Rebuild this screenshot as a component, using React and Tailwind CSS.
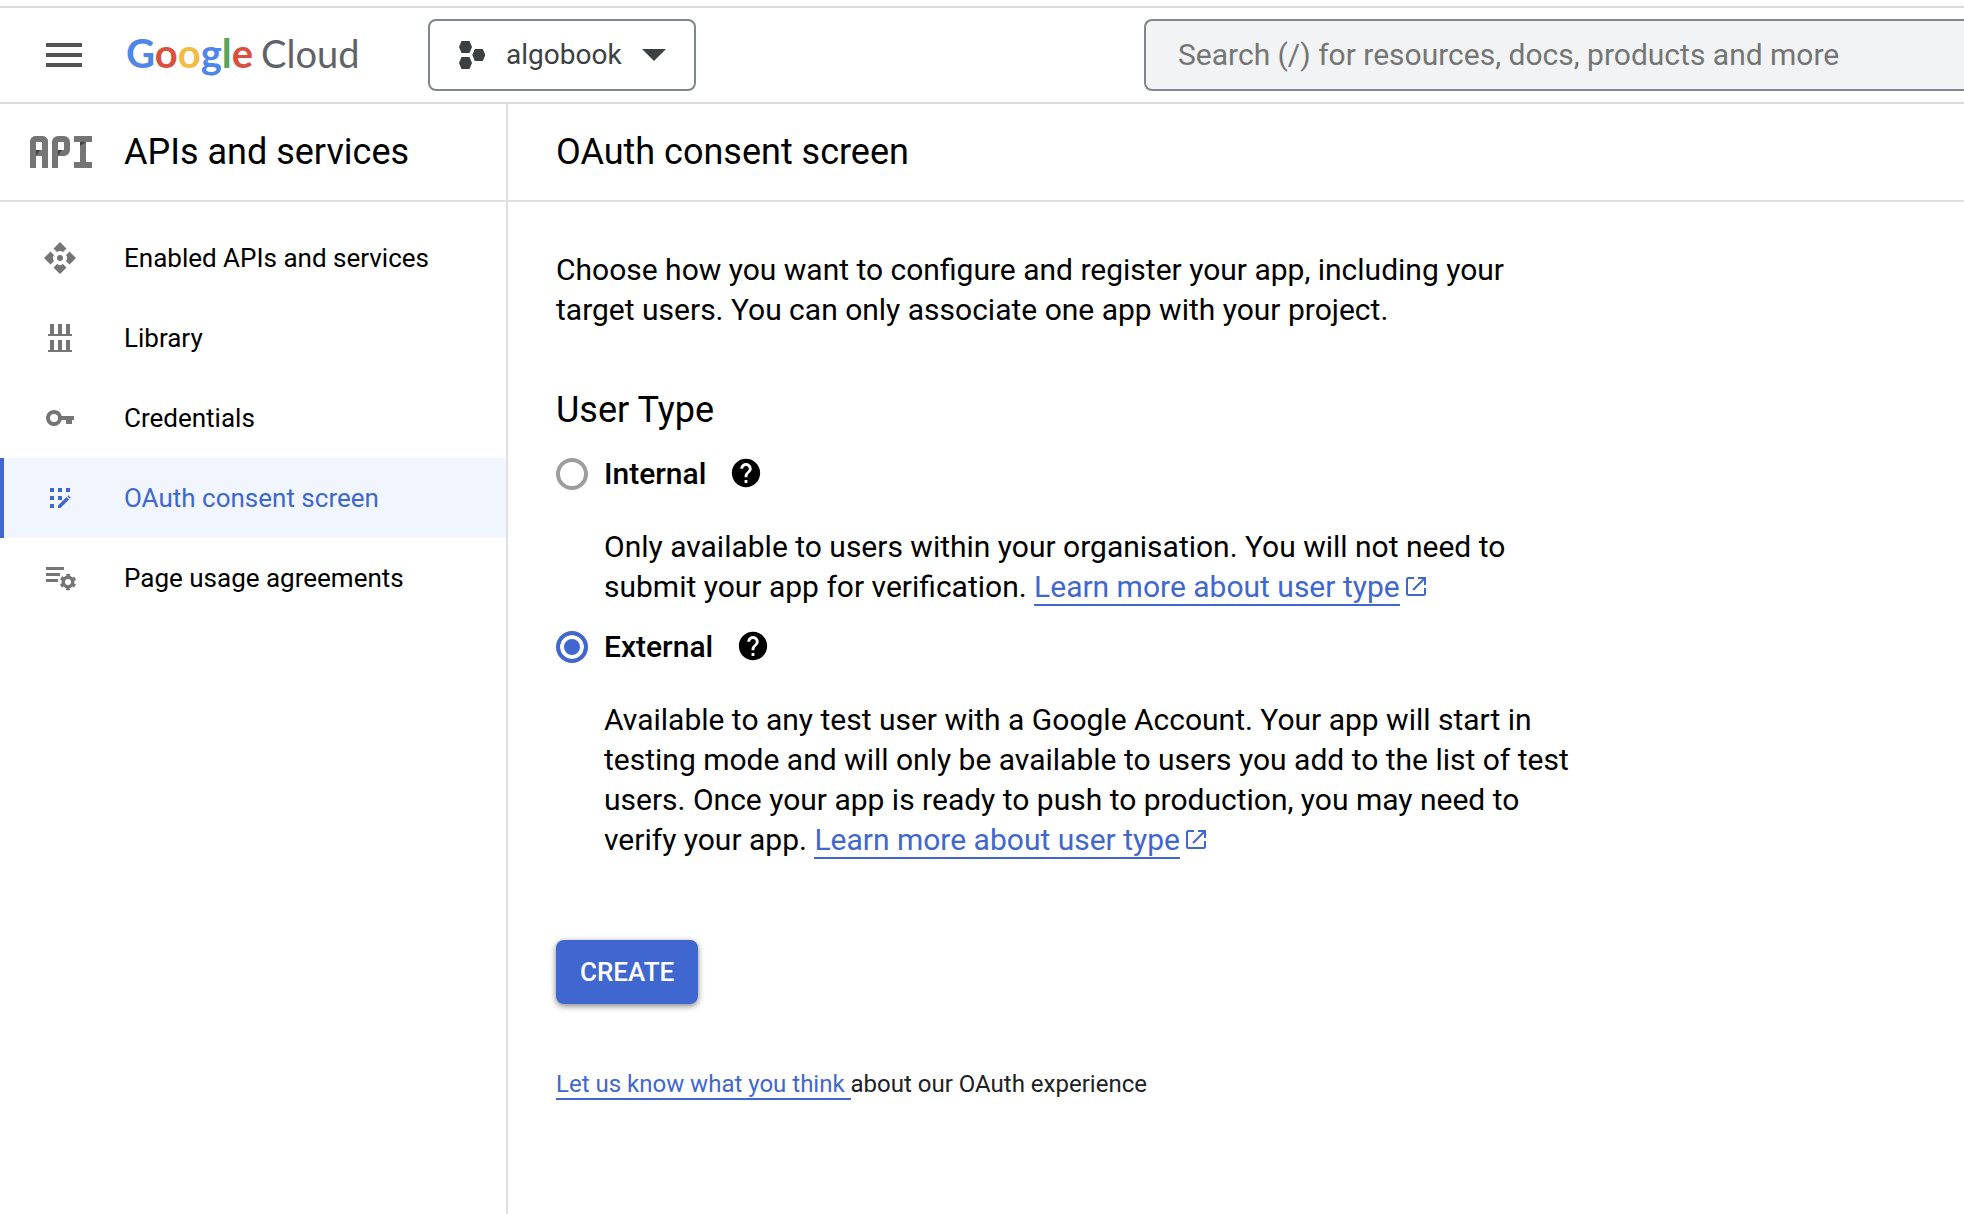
import React, { useState } from 'react';
import { MdHelp } from 'react-icons/md';

const ApiIcon = () => (
  <svg viewBox="0 0 32 32" className="w-8 h-8" fill="currentColor">
    <circle cx="16" cy="16" r="3" />
    <path d="M16 0l6.500 6.500-3.500 3.500a5 5 0 0 0-6 0L9.500 6.500z" />
    <path d="M16 32l6.500-6.500L19 22a5 5 0 0 1-6 0l-3.500 3.500z" />
    <path d="M0 16l6.500-6.500L10 13a5 5 0 0 0 0 6l-3.500 3.500z" />
    <path d="M32 16l-6.500-6.500L22 13a5 5 0 0 1 0 6l3.500 3.500z" />
  </svg>
);

const LibraryIcon = () => (
  <svg viewBox="0 0 32 32" className="w-8 h-8" fill="currentColor">
    <path d="M6 2h4v10h4V2h4v10h4V2h4v10h2v2H4v-2h2z" />
    <path d="M6 18h4v10h4V18h4v10h4V18h4v10h2v2H4v-2h2z" />
  </svg>
);

const KeyIcon = () => (
  <svg viewBox="0 0 32 32" className="w-8 h-8" fill="currentColor">
    <path fillRule="evenodd" d="M10 8a8 8 0 1 0 7.700 10H22v4h6v-4h2v-4H17.700A8 8 0 0 0 10 8zm0 4a4 4 0 1 1 0 8 4 4 0 0 1 0-8z" />
  </svg>
);

const ConsentIcon = () => (
  <svg viewBox="0 0 32 32" className="w-8 h-8" fill="currentColor">
    <path d="M6 6h4v4H6zM14 6h4v4h-4zM22 6h4v4h-4zM6 14h4v4H6zM14 14h4v4h-4zM6 22h4v4H6z" />
    <path d="M14 23.500l8.500-8.500 2.500 2.500-8.500 8.500H14zM23.300 14.200l1-1 2.500 2.500-1 1z" />
  </svg>
);

const AgreementIcon = () => (
  <svg viewBox="0 0 32 32" className="w-8 h-8">
    <path fill="currentColor" d="M2 5h18v3H2zM2 11h14v3H2zM2 17h12v3H2z" />
    <circle cx="24" cy="20" r="4.700" fill="none" stroke="currentColor" strokeWidth="3.400" />
    <circle cx="24" cy="20" r="7" fill="none" stroke="currentColor" strokeWidth="2.400" strokeDasharray="3.665" strokeDashoffset="-1.830" />
  </svg>
);

const OpenIcon = () => (
  <svg viewBox="0 0 20 24" className="inline w-5 h-6 ml-1.5 align-[-3px]" fill="none" stroke="currentColor" strokeWidth="2">
    <path d="M8 2H2.500A1.500 1.500 0 0 0 1 3.500v14A1.500 1.500 0 0 0 2.500 19h15a1.500 1.500 0 0 0 1.500-1.500V12M12 2h7v7M18.500 2.500L7 14" />
  </svg>
);

const navItems = [
  { label: 'Enabled APIs and services', Icon: ApiIcon },
  { label: 'Library', Icon: LibraryIcon },
  { label: 'Credentials', Icon: KeyIcon },
  { label: 'OAuth consent screen', Icon: ConsentIcon },
  { label: 'Page usage agreements', Icon: AgreementIcon },
];

const userTypes = [
  {
    id: 'internal',
    label: 'Internal',
    text: 'Only available to users within your organisation. You will not need to submit your app for verification.',
  },
  {
    id: 'external',
    label: 'External',
    text: 'Available to any test user with a Google Account. Your app will start in testing mode and will only be available to users you add to the list of test users. Once your app is ready to push to production, you may need to verify your app.',
  },
];

function Header() {
  return (
    <header className="mt-[6px] h-[98px] border-y-2 border-[#dadce0] flex items-center pl-[46px] shrink-0">
      <button aria-label="Main menu" className="text-[#545454]">
        <svg viewBox="0 0 36 24" className="w-9 h-6" fill="currentColor">
          <path d="M0 0h36v4H0zM0 10h36v4H0zM0 20h36v4H0z" />
        </svg>
      </button>
      <a href="#" className="ml-11 pb-1 w-[302px] flex items-baseline gap-2 font-['Lato',sans-serif] text-[40px] leading-none">
        <span className="font-bold">
          <span className="text-[#4f86ec]">G</span>
          <span className="text-[#d9503f]">o</span>
          <span className="text-[#f2bd42]">o</span>
          <span className="text-[#4f86ec]">g</span>
          <span className="text-[#58a55c]">l</span>
          <span className="text-[#d9503f]">e</span>
        </span>
        <span className="text-[38px] text-[#5f6368]">Cloud</span>
      </a>
      <button className="h-[72px] w-[268px] shrink-0 border-2 border-[#80868b] rounded-lg flex items-center pl-[29px] text-[28px] text-[#3c4043]">
        <svg viewBox="0 0 27 28" className="w-[27px] h-7" fill="currentColor">
          <path d="M2.500 0h8L13 6l-2.500 6h-8L0 6zM2.500 16h8L13 22l-2.500 6h-8L0 22zM15.800 8h8l2.500 6-2.500 6h-8l-2.500-6z" />
        </svg>
        <span className="ml-5">algobook</span>
        <svg viewBox="0 0 24 12" className="w-6 h-3 ml-5" fill="currentColor">
          <path d="M0 0h24L12 12z" />
        </svg>
      </button>
      <input
        type="search"
        aria-label="Search"
        placeholder="Search (/) for resources, docs, products and more"
        className="ml-112 flex-1 min-w-0 h-[72px] border-2 border-r-0 border-[#80868b] rounded-l-lg bg-[#f1f3f4] px-8 pb-0.5 text-[30px] placeholder:text-[#757575] outline-none"
      />
    </header>
  );
}

function Sidebar() {
  return (
    <aside className="w-[508px] shrink-0 border-r-2 border-[#e0e0e0]">
      <div className="h-[98px] border-b-2 border-[#e0e0e0] flex items-center pl-[30px]">
        <svg viewBox="0 0 62 32" className="w-[62px] h-8">
          <g fill="none" stroke="#757575" strokeWidth="6">
            <rect x="3" y="3" width="12" height="40" rx="3" />
            <rect x="3" y="3" width="12" height="14" rx="3" />
            <rect x="25" y="3" width="12" height="14" rx="3" />
            <line x1="25" y1="6" x2="25" y2="32" />
            <line x1="44" y1="3" x2="62" y2="3" />
            <line x1="44" y1="29" x2="62" y2="29" />
            <line x1="53" y1="3" x2="53" y2="29" />
          </g>
          <path d="M6 14h4l-4 6zM28 14h4l-4 6zM50 6h6l-6 4z" fill="#424242" />
        </svg>
        <h2 className="ml-8 text-[36px]">APIs and services</h2>
      </div>
      <nav className="pt-4">
        {navItems.map(({ label, Icon }) => {
          const active = label === 'OAuth consent screen';
          return (
            <a
              key={label}
              href="#"
              className={`h-20 flex items-center gap-12 border-l-4 pl-10 text-[26px] ${
                active ? 'border-[#4067d0] bg-[#f0f5fe] text-[#4067d0]' : 'border-transparent'
              }`}
            >
              <span className={active ? '' : 'text-[#757575]'}><Icon /></span>
              {label}
            </a>
          );
        })}
      </nav>
    </aside>
  );
}

function UserTypeOption({ option, checked, onChange }) {
  return (
    <div>
      <div className="h-10 flex items-center">
        <input
          type="radio"
          id={option.id}
          name="userType"
          checked={checked}
          onChange={onChange}
          className="appearance-none w-8 h-8 rounded-full border-4 border-[#9e9e9e] checked:border-[#4067d0] checked:bg-[#4067d0] checked:shadow-[inset_0_0_0_4px_#fff]"
        />
        <label htmlFor={option.id} className="ml-4 font-medium">{option.label}</label>
        <button aria-label={`About ${option.label}`} className="ml-[23px] pb-0.5">
          <MdHelp size={34} />
        </button>
      </div>
      <p className="mt-[33px] ml-12">
        {option.text}{' '}
        <span className="text-[#4067d0] whitespace-nowrap">
          <a href="#" className="border-b-2 border-[#4067d0]">Learn more about user type</a>
          <OpenIcon />
        </span>
      </p>
    </div>
  );
}

export default function App() {
  const [userType, setUserType] = useState('external');

  return (
    <div className="min-h-screen flex flex-col bg-white text-black font-['Roboto',sans-serif]">
      <Header />
      <div className="flex flex-1">
        <Sidebar />
        <main className="flex-1 min-w-0">
          <div className="h-[98px] border-b-2 border-[#e0e0e0] flex items-center pl-12">
            <h1 className="text-[36px]">OAuth consent screen</h1>
          </div>
          <div className="pl-12 pt-12 max-w-[1064px] text-[30px] leading-10">
            <p>Choose how you want to configure and register your app, including your target users. You can only associate one app with your project.</p>
            <fieldset className="mt-[60px]">
              <legend className="text-[36px]">User Type</legend>
              <div className="mt-6 flex flex-col gap-5">
                {userTypes.map((option) => (
                  <UserTypeOption
                    key={option.id}
                    option={option}
                    checked={userType === option.id}
                    onChange={() => setUserType(option.id)}
                  />
                ))}
              </div>
            </fieldset>
            <button className="mt-20 h-16 px-6 rounded-lg bg-[#4067d0] text-white text-[26px] font-medium shadow-[0_2px_6px_rgba(0,0,0,0.5)] block">
              CREATE
            </button>
            <p className="mt-[60px] text-[24px] text-[#202124]">
              <a href="#" className="text-[#4067d0] border-b-2 border-[#4067d0] whitespace-pre">Let us know what you think </a>
              about our OAuth experience
            </p>
          </div>
        </main>
      </div>
    </div>
  );
}
